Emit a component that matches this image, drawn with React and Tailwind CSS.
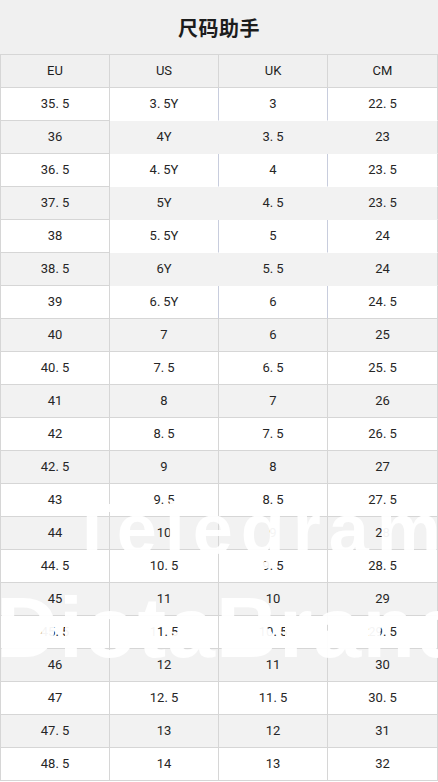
import React from 'react'

const ROWS = [
  ['35.5', '3.5Y', '3', '22.5'],
  ['36', '4Y', '3.5', '23'],
  ['36.5', '4.5Y', '4', '23.5'],
  ['37.5', '5Y', '4.5', '23.5'],
  ['38', '5.5Y', '5', '24'],
  ['38.5', '6Y', '5.5', '24'],
  ['39', '6.5Y', '6', '24.5'],
  ['40', '7', '6', '25'],
  ['40.5', '7.5', '6.5', '25.5'],
  ['41', '8', '7', '26'],
  ['42', '8.5', '7.5', '26.5'],
  ['42.5', '9', '8', '27'],
  ['43', '9.5', '8.5', '27.5'],
  ['44', '10', '9', '28'],
  ['44.5', '10.5', '9.5', '28.5'],
  ['45', '11', '10', '29'],
  ['45.5', '11.5', '10.5', '29.5'],
  ['46', '12', '11', '30'],
  ['47', '12.5', '11.5', '30.5'],
  ['47.5', '13', '12', '31'],
  ['48.5', '14', '13', '32'],
]

const HEAD = ['EU', 'US', 'UK', 'CM']

function Num({ v }) {
  const [a, b] = v.split('.')
  if (b === undefined) return v
  return (
    <>
      {a}.<span className="ml-[3px]">{b}</span>
    </>
  )
}

function cellClass(i, c) {
  const grey = i % 2 === 1
  const bg = grey ? 'bg-[#f2f2f2]' : 'bg-white'
  // first rows: the right-hand columns were drawn without grid lines
  const loose = i < 7 && c > 0
  let bottom = 'border-b-[#d6d6d6]'
  if (loose && i < 6) bottom = 'border-b-transparent'
  let right = 'border-r-[#d6d6d6]'
  if (loose && c < 3) right = grey ? 'border-r-transparent' : 'border-r-[#c8cddd]'
  const left = c === 0 ? 'border-l border-l-[#d6d6d6]' : ''
  return `${bg} ${bottom} ${right} ${left} border-b border-r h-[33px] flex items-center justify-center`
}

export default function App() {
  return (
    <div
      className="relative w-[438px] overflow-hidden bg-white text-[#262626]"
      style={{ fontFamily: 'Roboto, "Noto Sans CJK SC", sans-serif' }}
    >
      <div className="h-[54px] bg-[#f0f0f0] flex items-center justify-center pt-[2px]">
        <h1
          className="text-[20px] font-bold text-[#1c1c1c] tracking-[0.5px]"
          style={{ fontFamily: '"Noto Sans CJK SC", sans-serif' }}
        >
          尺码助手
        </h1>
      </div>

      <div className="grid grid-cols-[110px_109px_109px_110px] text-[13px]">
        {HEAD.map((h, c) => (
          <div
            key={h}
            className={`h-[34px] bg-[#f0f0f0] border-t border-b border-r border-t-[#d6d6d6] border-b-[#d6d6d6] border-r-[#d6d6d6] flex items-center justify-center text-[#1e1e1e] ${
              c === 0 ? 'border-l border-l-[#d6d6d6]' : ''
            }`}
          >
            {h}
          </div>
        ))}
        {ROWS.map((row, i) =>
          row.map((v, c) => (
            <div key={`${i}-${c}`} className={cellClass(i, c)}>
              <Num v={v} />
            </div>
          ))
        )}
      </div>

      {/* watermark laid over the table */}
      <div
        className="pointer-events-none absolute left-[70px] top-[493px] text-[72px] leading-none font-bold text-white/95 tracking-[8px] whitespace-nowrap"
        style={{ fontFamily: '"Liberation Sans", Arial, sans-serif' }}
      >
        Telegram
      </div>
      <div
        className="pointer-events-none absolute left-[-4px] top-[584px] text-[86px] leading-none font-bold text-white/95 tracking-[1px] whitespace-nowrap"
        style={{ fontFamily: '"Liberation Sans", Arial, sans-serif' }}
      >
        DiotaBrand
      </div>
    </div>
  )
}
